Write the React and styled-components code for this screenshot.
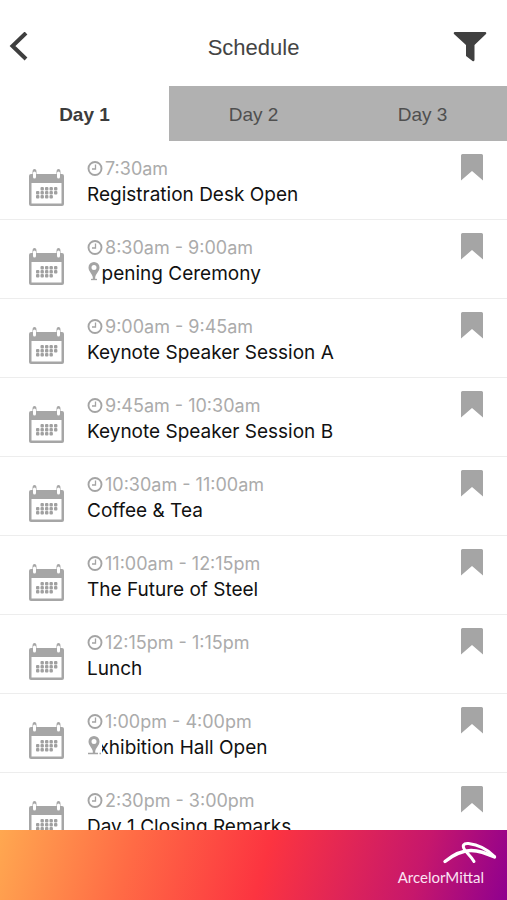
import React, { useState } from "react";
import styled, { createGlobalStyle, css } from "styled-components";

const GlobalStyle = createGlobalStyle`
  * { box-sizing: border-box; }
  body { margin: 0; background: #fff; }
  button { padding: 0; border: 0; background: transparent; cursor: pointer; font-family: inherit; }
  svg { display: block; }
`;

const Page = styled.div`
  height: 100vh;
  display: flex;
  flex-direction: column;
  background: #fff;
  font-family: "Liberation Sans", Arial, sans-serif;
`;

const Header = styled.header`
  flex: none;
  display: grid;
  grid-template-columns: 1fr auto 1fr;
  align-items: center;
  height: 86px;
  padding: 8px 20px 0 9px;
`;
const Title = styled.h1`
  margin: 0;
  padding: 2px 0 0 11px;
  font-size: 22px;
  font-weight: 400;
  line-height: 28px;
  color: #444;
`;
const HeaderButton = styled.button`
  justify-self: ${({ $end }) => ($end ? "end" : "start")};
`;

const Tabs = styled.div`
  flex: none;
  display: grid;
  grid-template-columns: repeat(3, 1fr);
  height: 55px;
`;
const Tab = styled.button`
  background: #b1b1b1;
  color: #4f4f4f;
  font-size: 19px;
  padding-top: 2px;

  ${({ $active }) => $active && css`
    background: #fff;
    color: #3c3c3c;
    font-weight: 700;
  `}
`;

const List = styled.ul`
  flex: 1;
  min-height: 0;
  overflow: hidden;
  margin: 0;
  padding: 0;
  list-style: none;
  font-family: Inter, "Liberation Sans", sans-serif;
`;
const Row = styled.li`
  display: flex;
  align-items: flex-start;
  height: 79px;
  padding: 0 24px 0 28px;
  border-bottom: 1px solid #ededed;
`;
const CalendarCell = styled.div`
  flex: none;
  width: 59px;
  padding-top: 28px;
`;
const Details = styled.div`
  flex: 1;
  min-width: 0;
  padding-top: 15px;
`;
const Time = styled.div`
  display: flex;
  align-items: center;
  gap: 2px;
  font-size: 18px;
  line-height: 26px;
  color: #ababab;
`;
const Session = styled.div`
  position: relative;
  font-size: 19px;
  line-height: 26px;
  color: #111;
  white-space: nowrap;
`;
const PinBadge = styled.span`
  position: absolute;
  top: 1px;
  left: 0;
  width: 15px;
  height: 23px;
  background: #fff;
`;
const BookmarkButton = styled.button`
  flex: none;
  margin-top: 13px;
`;

const Footer = styled.footer`
  flex: none;
  display: flex;
  justify-content: flex-end;
  height: 70px;
  padding: 11px 10px 0 0;
  background: linear-gradient(106deg, #ffa850 0%, #ff6b45 26%, #fc3440 52%, #c6176c 82%, #8f008f 100%);
`;
const Brand = styled.div`
  display: flex;
  flex-direction: column;
  align-items: flex-end;
`;
const BrandName = styled.span`
  padding-right: 13px;
  font-family: Lato, sans-serif;
  font-size: 15px;
  line-height: 20px;
  margin-top: 2px;
  color: #fbe3f3;
`;

const BackIcon = () => (
  <svg width="20" height="30" viewBox="0 0 20 30" fill="none" stroke="#3f3f3f" strokeWidth="4">
    <path d="M17 1 3.500 14 17 27" />
  </svg>
);

const FilterIcon = () => (
  <svg width="34" height="30" viewBox="0 0 34 30" fill="#404040">
    <path d="M1.500 0h31q1.500 1 .5 2L21.500 13V28q-.5 2-2 1L13 24V13L1 2Q0 1 1.500 0z" />
  </svg>
);

// the dots stand for the days of the month, one row each
const dayRows = [
  { y: 19, from: 1 },
  { y: 23, from: 0 },
  { y: 27, from: 0, to: 3 },
];

const CalendarIcon = () => (
  <svg width="37" height="38" viewBox="0 0 37 38">
    <path d="M3 5h31q2 0 2 2v28q0 2-2 2H3q-2 0-2-2V7q0-2 2-2z" fill="#a6a6a6" />
    <path d="M3.500 14h30v20.500h-30z" fill="#fff" />
    {[6.500, 30.500].map((x) => (
      <g key={x}>
        <path d={`M${x - 2} 8V3q0-3 2-3t2 3v5z`} fill="#a6a6a6" />
        <rect x={x - 1.500} y="2.500" width="3" height="7" rx="1.500" fill="#fff" />
      </g>
    ))}
    <g fill="#a0a0a0">
      {dayRows.map(({ y, from, to = 4 }) =>
        [0, 1, 2, 3, 4].map((n) => n >= from && n <= to && (
          <rect key={`${y}-${n}`} x={8 + n * 4.500} y={y - 1} width="3.400" height="3.400" rx="1" />
        ))
      )}
    </g>
  </svg>
);

const ClockIcon = () => (
  <svg width="16" height="16" viewBox="0 0 16 16" fill="none" stroke="#a4a4a4">
    <circle cx="8" cy="7.500" r="6.500" strokeWidth="1.900" />
    <path d="M8.500 3.500v4.500H5" strokeWidth="1.300" />
  </svg>
);

const PinIcon = ({ ground }) => (
  <svg width="15" height="20" viewBox="0 0 15 20">
    <path
      d="M7 0a5.500 5.500 0 0 1 5.500 5.500c0 3.500-3 5.500-4.300 9.500v2H5.800v-2C4.500 11 1.500 9 1.500 5.500A5.500 5.500 0 0 1 7 0zm0 3a2.500 2.500 0 1 0 0 5 2.500 2.500 0 0 0 0-5z"
      fill="#a4a4a4"
      fillRule="evenodd"
    />
    <path d={ground ? "M1 17.500h10M12.500 17.500h1.500" : "M4 17.500h6"} stroke="#a4a4a4" strokeWidth="1.300" />
  </svg>
);

const BookmarkIcon = () => (
  <svg width="22" height="27" viewBox="0 0 22 27" fill="#a5a5a5">
    <path d="M1.500 0h19Q22 0 22 1.500V26.500L11 17 0 26.500V1.500Q0 0 1.500 0z" />
  </svg>
);

const BrandMark = () => (
  <svg width="56" height="24" viewBox="0 0 56 24" fill="none" stroke="#fff" strokeLinecap="round" strokeLinejoin="round">
    <path d="M4 20.500C12 14 21 9.500 30 9.500c8 0 14 2.500 23.500 6.500" strokeWidth="3.400" />
    <path d="M53.500 15.500C46 8 36 3.500 27.500 2.500c-5-.5-6.500 2-4 6C26 12.500 30 15 33 20.500" strokeWidth="3" />
  </svg>
);

const days = ["Day 1", "Day 2", "Day 3"];

const sessions = [
  { time: "7:30am", name: "Registration Desk Open" },
  { time: "8:30am - 9:00am", name: "Opening Ceremony", pin: true },
  { time: "9:00am - 9:45am", name: "Keynote Speaker Session A" },
  { time: "9:45am - 10:30am", name: "Keynote Speaker Session B" },
  { time: "10:30am - 11:00am", name: "Coffee & Tea" },
  { time: "11:00am - 12:15pm", name: "The Future of Steel" },
  { time: "12:15pm - 1:15pm", name: "Lunch" },
  { time: "1:00pm - 4:00pm", name: "Exhibition Hall Open", pin: true, ground: true },
  { time: "2:30pm - 3:00pm", name: "Day 1 Closing Remarks" },
];

export default function App() {
  const [activeDay, setActiveDay] = useState("Day 1");

  return (
    <Page>
      <GlobalStyle />

      <Header>
        <HeaderButton type="button" aria-label="Back"><BackIcon /></HeaderButton>
        <Title>Schedule</Title>
        <HeaderButton type="button" aria-label="Filter" $end><FilterIcon /></HeaderButton>
      </Header>

      <Tabs role="tablist">
        {days.map((day) => (
          <Tab
            key={day}
            type="button"
            role="tab"
            aria-selected={day === activeDay}
            $active={day === activeDay}
            onClick={() => setActiveDay(day)}
          >
            {day}
          </Tab>
        ))}
      </Tabs>

      <List>
        {sessions.map(({ time, name, pin, ground }) => (
          <Row key={name}>
            <CalendarCell><CalendarIcon /></CalendarCell>
            <Details>
              <Time><ClockIcon />{time}</Time>
              <Session>
                {name}
                {pin && <PinBadge><PinIcon ground={ground} /></PinBadge>}
              </Session>
            </Details>
            <BookmarkButton type="button" aria-label={`Bookmark ${name}`}><BookmarkIcon /></BookmarkButton>
          </Row>
        ))}
      </List>

      <Footer>
        <Brand>
          <BrandMark />
          <BrandName>ArcelorMittal</BrandName>
        </Brand>
      </Footer>
    </Page>
  );
}
